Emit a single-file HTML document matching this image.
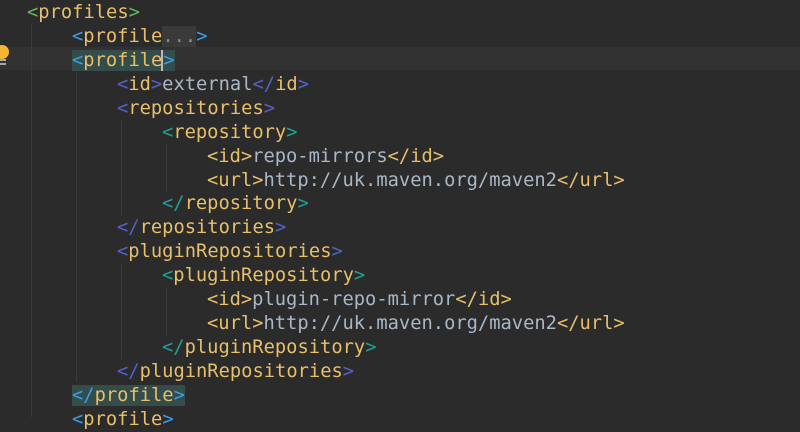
<!DOCTYPE html>
<html><head><meta charset="utf-8"><style>
body{margin:0;width:800px;height:417px;background:#2b2b2b;overflow:hidden;position:relative;font-family:"DejaVu Sans Mono","Liberation Mono",monospace;}
.l{position:absolute;left:0;height:24px;line-height:24px;font-size:18.75px;white-space:pre;color:#e8bf6a;letter-spacing:0px}
.cur{position:absolute;left:0;top:47px;width:800px;height:23px;background:#323232}
.g{position:absolute;width:1px;background:#3a3a3a}
.hl{background:#344c4a}
.a{color:#5fb85f}.b{color:#3b9fe8}.c{color:#5462c8}.d{color:#20a296}.e{color:#e8bf6a}
.t{color:#a9b7c6}
.fold{background:#3a3a3a;color:#8a8a8a}
</style></head><body>
<div class="cur"></div>
<div class="g" style="left:31px;top:24px;height:393px"></div>
<div class="g" style="left:76px;top:72px;height:310px"></div>
<div class="g" style="left:121px;top:120px;height:96px"></div>
<div class="g" style="left:121px;top:263px;height:96px"></div>
<div class="g" style="left:166px;top:144px;height:48px"></div>
<div class="g" style="left:166px;top:287px;height:48px"></div>
<svg style="position:absolute;left:0;top:44px" width="10" height="22"><circle cx="2" cy="8" r="7" fill="#f4b731"/><rect x="-2" y="15" width="8" height="2" fill="#aaa"/><rect x="-2" y="19" width="8" height="2" fill="#aaa"/></svg>
<div id="c"></div>
<script>
var h=23.93,o=1,cw=11.25;
var L=[
[0,'<span class="a">&lt;</span>profiles<span class="a">&gt;</span>'],
[1,'<span class="b">&lt;</span>profile<span class="fold">...</span><span class="b">&gt;</span>'],
[1,'<span class="hl"><span class="b">&lt;</span>profile<span style="border-left:2px solid #bbb;margin-left:-1px"></span><span class="b">&gt;</span></span>'],
[2,'<span class="c">&lt;</span>id<span class="c">&gt;</span><span class="t">external</span><span class="c">&lt;/</span>id<span class="c">&gt;</span>'],
[2,'<span class="c">&lt;</span>repositories<span class="c">&gt;</span>'],
[3,'<span class="d">&lt;</span>repository<span class="d">&gt;</span>'],
[4,'&lt;id&gt;<span class="t">repo-mirrors</span>&lt;/id&gt;'],
[4,'&lt;url&gt;<span class="t">http://uk.maven.org/maven2</span>&lt;/url&gt;'],
[3,'<span class="d">&lt;/</span>repository<span class="d">&gt;</span>'],
[2,'<span class="c">&lt;/</span>repositories<span class="c">&gt;</span>'],
[2,'<span class="c">&lt;</span>pluginRepositories<span class="c">&gt;</span>'],
[3,'<span class="d">&lt;</span>pluginRepository<span class="d">&gt;</span>'],
[4,'&lt;id&gt;<span class="t">plugin-repo-mirror</span>&lt;/id&gt;'],
[4,'&lt;url&gt;<span class="t">http://uk.maven.org/maven2</span>&lt;/url&gt;'],
[3,'<span class="d">&lt;/</span>pluginRepository<span class="d">&gt;</span>'],
[2,'<span class="c">&lt;/</span>pluginRepositories<span class="c">&gt;</span>'],
[1,'<span class="hl"><span class="b">&lt;/</span>profile<span class="b">&gt;</span></span>'],
[1,'<span class="b">&lt;</span>profile<span class="b">&gt;</span>']];
var s='';
L.forEach(function(x,i){s+='<div class="l" style="top:'+(o+i*h)+'px;left:'+(27+x[0]*45)+'px">'+x[1]+'</div>';});
document.getElementById('c').innerHTML=s;
</script>
</body></html>
